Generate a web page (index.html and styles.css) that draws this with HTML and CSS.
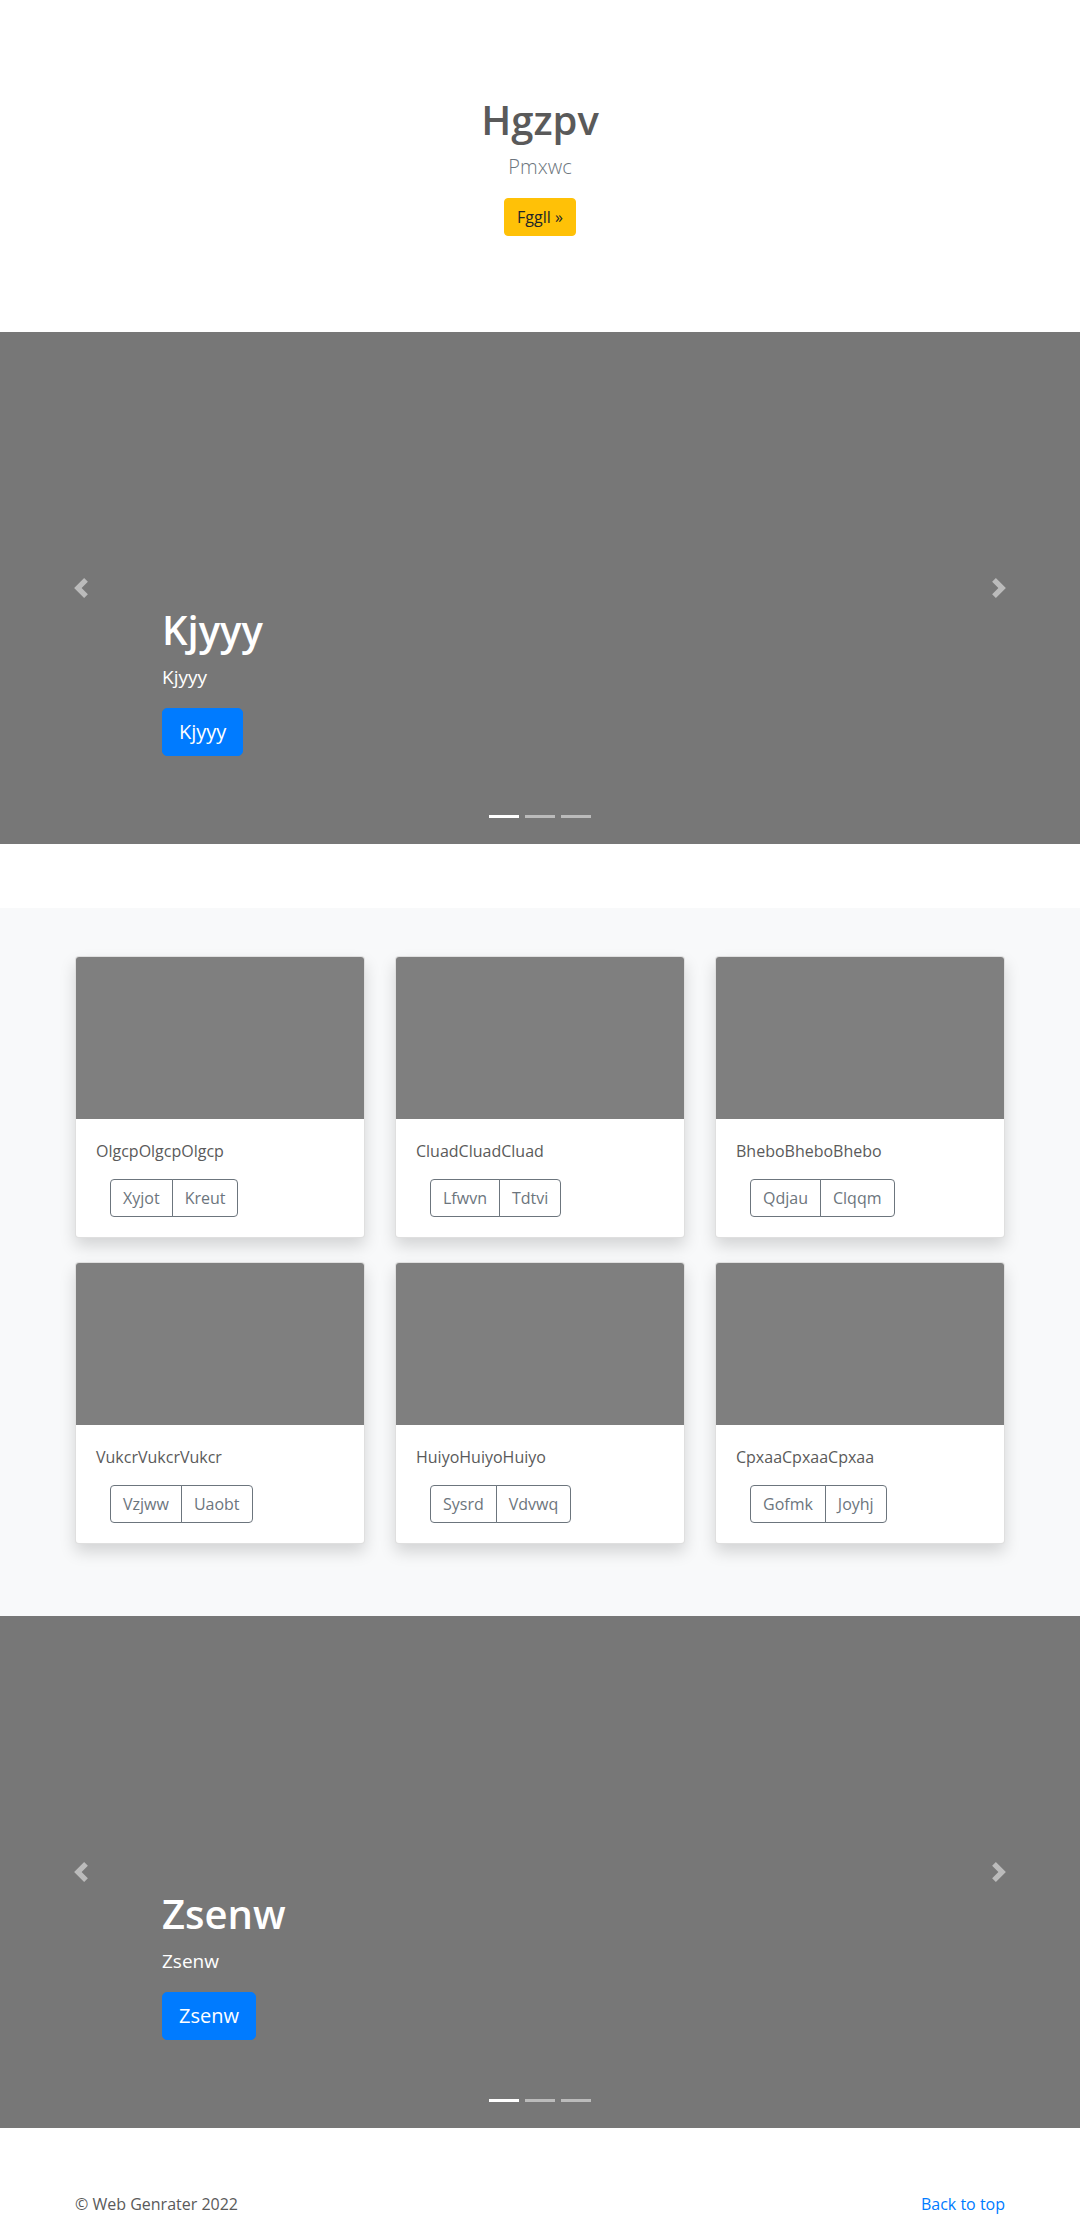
FILE: index.html
```html
<!DOCTYPE html>
<html lang="en">
<head>
<meta charset="utf-8">
<title>Hgzpv</title>
<link rel="stylesheet" href="styles.css">
</head>
<body>
<section class="hero">
  <h1 class="hero-title">Hgzpv</h1>
  <p class="lead">Pmxwc</p>
  <a class="btn btn-warning" href="#">Fggll »</a>
</section>

<div class="carousel carousel-first">
  <div class="caption">
    <h1 class="caption-title">Kjyyy</h1>
    <p class="caption-text">Kjyyy</p>
    <a class="btn btn-lg btn-primary" href="#">Kjyyy</a>
  </div>
  <a class="control control-prev" href="#"><svg width="20" height="20" viewBox="0 0 8 8"><path fill="#fff" d="M5.25 0l-4 4 4 4 1.5-1.5L4.25 4l2.5-2.5L5.25 0z"/></svg></a>
  <a class="control control-next" href="#"><svg width="20" height="20" viewBox="0 0 8 8"><path fill="#fff" d="M2.75 0l-1.5 1.5L3.75 4l-2.5 2.5L2.75 8l4-4-4-4z"/></svg></a>
  <ol class="indicators"><li class="active"></li><li></li><li></li></ol>
</div>

<section class="album">
  <div class="grid">
    <div class="card"><div class="card-img"></div><div class="card-body"><p class="card-text">OlgcpOlgcpOlgcp</p><div class="btn-group"><button class="btn btn-outline">Xyjot</button><button class="btn btn-outline">Kreut</button></div></div></div>
    <div class="card"><div class="card-img"></div><div class="card-body"><p class="card-text">CluadCluadCluad</p><div class="btn-group"><button class="btn btn-outline">Lfwvn</button><button class="btn btn-outline">Tdtvi</button></div></div></div>
    <div class="card"><div class="card-img"></div><div class="card-body"><p class="card-text">BheboBheboBhebo</p><div class="btn-group"><button class="btn btn-outline">Qdjau</button><button class="btn btn-outline">Clqqm</button></div></div></div>
    <div class="card"><div class="card-img"></div><div class="card-body"><p class="card-text">VukcrVukcrVukcr</p><div class="btn-group"><button class="btn btn-outline">Vzjww</button><button class="btn btn-outline">Uaobt</button></div></div></div>
    <div class="card"><div class="card-img"></div><div class="card-body"><p class="card-text">HuiyoHuiyoHuiyo</p><div class="btn-group"><button class="btn btn-outline">Sysrd</button><button class="btn btn-outline">Vdvwq</button></div></div></div>
    <div class="card"><div class="card-img"></div><div class="card-body"><p class="card-text">CpxaaCpxaaCpxaa</p><div class="btn-group"><button class="btn btn-outline">Gofmk</button><button class="btn btn-outline">Joyhj</button></div></div></div>
  </div>
</section>

<div class="carousel">
  <div class="caption">
    <h1 class="caption-title">Zsenw</h1>
    <p class="caption-text">Zsenw</p>
    <a class="btn btn-lg btn-primary" href="#">Zsenw</a>
  </div>
  <a class="control control-prev" href="#"><svg width="20" height="20" viewBox="0 0 8 8"><path fill="#fff" d="M5.25 0l-4 4 4 4 1.5-1.5L4.25 4l2.5-2.5L5.25 0z"/></svg></a>
  <a class="control control-next" href="#"><svg width="20" height="20" viewBox="0 0 8 8"><path fill="#fff" d="M2.75 0l-1.5 1.5L3.75 4l-2.5 2.5L2.75 8l4-4-4-4z"/></svg></a>
  <ol class="indicators"><li class="active"></li><li></li><li></li></ol>
</div>

<footer class="footer">
  <p class="copy">© Web Genrater 2022</p>
  <a class="top-link" href="#">Back to top</a>
</footer>
</body>
</html>
```

FILE: styles.css
```css
* { box-sizing: border-box; }
html, body { margin: 0; padding: 0; }
body {
  font-family: "Open Sans", "Noto Sans", "Liberation Sans", sans-serif;
  font-size: 16px;
  line-height: 1.5;
  color: #5a5a5a;
  background: #fff;
}
a { text-decoration: none; }

.btn {
  display: inline-block;
  font-family: inherit;
  font-size: 16px;
  line-height: 24px;
  padding: 6px 12px;
  border: 1px solid transparent;
  border-radius: 4px;
  background: transparent;
  cursor: pointer;
}
.btn-lg { font-size: 20px; line-height: 30px; padding: 8px 16px; border-radius: 5px; }
.btn-warning { background: #ffc107; border-color: #ffc107; color: #212529; }
.btn-primary { background: #007bff; border-color: #007bff; color: #fff; }
.btn-outline { border-color: #6c757d; color: #6c757d; }

.hero {
  padding: 96px 0;
  display: flex;
  flex-direction: column;
  align-items: center;
  text-align: center;
}
.hero-title { margin: 0 0 8px; font-size: 40px; line-height: 48px; font-weight: 600; color: #5a5a5a; }
.lead { margin: 0 0 16px; font-size: 20px; line-height: 30px; font-weight: 300; color: #6c757d; }

.carousel {
  position: relative;
  height: 512px;
  background: #777;
  display: flex;
  flex-direction: column;
  justify-content: flex-end;
  padding: 0 15% 88px;
  color: #fff;
}
.carousel-first { margin-bottom: 64px; }
.caption { display: flex; flex-direction: column; align-items: flex-start; }
.caption-title { margin: 0 0 8px; font-size: 40px; line-height: 48px; font-weight: 600; }
.caption-text { margin: 0 0 16px; font-size: 19px; line-height: 30px; }

.control {
  position: absolute;
  top: 0;
  bottom: 0;
  width: 15%;
  display: flex;
  align-items: center;
  justify-content: center;
  opacity: .5;
}
.control svg { display: block; }
.control-prev { left: 0; }
.control-next { right: 0; }

.indicators {
  position: absolute;
  left: 0;
  right: 0;
  bottom: 26px;
  margin: 0;
  padding: 0;
  list-style: none;
  display: flex;
  justify-content: center;
  gap: 6px;
}
.indicators li { width: 30px; height: 3px; background: #fff; opacity: .5; }
.indicators li.active { opacity: 1; }

.album { background: #f8f9fa; padding: 48px 0 72px; }
.grid {
  width: 930px;
  margin: 0 auto;
  display: grid;
  grid-template-columns: repeat(3, 1fr);
  column-gap: 30px;
  row-gap: 24px;
}
.card {
  background: #fff;
  border: 1px solid rgba(0,0,0,.125);
  border-radius: 4px;
  box-shadow: 0 8px 16px rgba(0,0,0,.15);
  overflow: hidden;
}
.card-img { height: 162px; background: #7f7f7f; }
.card-body { padding: 20px; }
.card-text { margin: 0 0 16px; font-size: 16px; line-height: 24px; }
.btn-group { display: inline-flex; margin-left: 14px; }
.btn-group .btn:first-child { border-top-right-radius: 0; border-bottom-right-radius: 0; }
.btn-group .btn + .btn { margin-left: -1px; border-top-left-radius: 0; border-bottom-left-radius: 0; }

.footer {
  width: 930px;
  margin: 0 auto;
  padding-top: 64px;
  display: flex;
  justify-content: space-between;
}
.copy { margin: 0; }
.top-link { color: #007bff; }
```
